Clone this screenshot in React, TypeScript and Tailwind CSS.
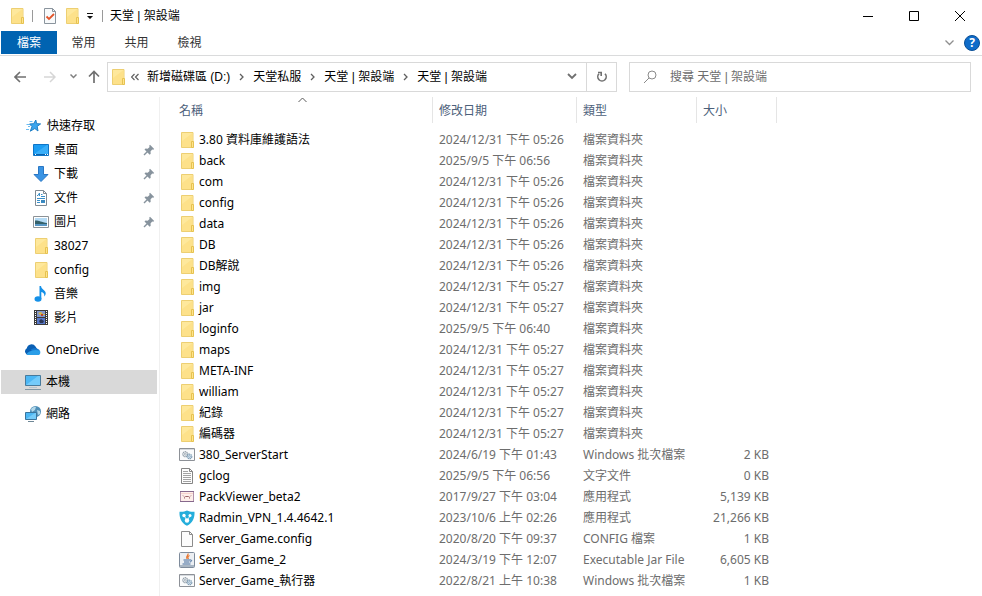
import type { ReactNode } from "react";

const folder = (
  <svg className="shrink-0" width="16" height="16" viewBox="0 0 16 16" fill="none">
    <path d="M2.5.5h11.500v15H2.500z" fill="#fee89c" stroke="#edcf72" />
    <path d="M3 15V9l10.500-8v14z" fill="#fde18a" />
    <path d="M12.500 9.500h2v6h-2z" fill="#ffe48c" stroke="#e6c251" />
  </svg>
);
const batch = (
  <svg className="shrink-0" width="16" height="16" viewBox="0 0 16 16" fill="none">
    <path d="M.5 1.500h15v12H.5z" fill="#fafbfc" stroke="#8d9197" />
    <path d="M1 2h14v1H1z" fill="#d5d9de" />
    <circle cx="6.300" cy="7.200" r="2.500" fill="#eef2f5" stroke="#8f9ba6" strokeWidth="1.200" strokeDasharray="1.300 .5" />
    <circle cx="6.300" cy="7.200" r="1" stroke="#8f9ba6" strokeWidth=".7" />
    <circle cx="10.500" cy="9.500" r="2.300" fill="#dcebf5" stroke="#7e9bb3" strokeWidth="1.200" strokeDasharray="1.300 .5" />
    <circle cx="10.500" cy="9.500" r=".9" stroke="#7e9bb3" strokeWidth=".7" />
  </svg>
);
const textFile = (
  <svg className="shrink-0" width="16" height="16" viewBox="0 0 16 16" fill="none">
    <path d="M2.500.5h8l3 3v12h-11z" fill="#fdfdfd" stroke="#858585" />
    <path d="M10.500.5v3h3" stroke="#858585" />
    <path d="M4 3.500h5M4 5.500h8M4 7.500h8M4 9.500h8M4 11.500h8M4 13.500h8" stroke="#a3a3a3" />
  </svg>
);
const blankFile = (
  <svg className="shrink-0" width="16" height="16" viewBox="0 0 16 16" fill="none">
    <path d="M2.500.5h8l3 3v12h-11z" fill="#fcfcfc" stroke="#8c8c8c" />
    <path d="M10.500.5v3h3" stroke="#8c8c8c" />
  </svg>
);
const packViewer = (
  <svg className="shrink-0" width="16" height="16" viewBox="0 0 16 16" fill="none">
    <path d="M1.500 2.500h13v10h-13z" fill="#fdeeea" stroke="#b193ad" />
    <path d="M1 2.500h14M1 12.500h14" stroke="#86688c" />
    <path d="M2 4.500h12" stroke="#f7d3cd" />
    <path d="M5.500 9.500V8.500l1-1h3l1 1v1M4 6.500l1 1M12 6.500l-1 1" stroke="#9c6468" />
  </svg>
);
const radmin = (
  <svg className="shrink-0" width="16" height="16" viewBox="0 0 16 16" fill="none">
    <path d="M8 .5c2.500 1.300 5 1.500 7.500 1.200.4 6-1.800 11.300-7.500 14.100C2.300 13 .1 7.700.5 1.700 3 2 5.500 1.800 8 .5z" fill="#25aedb" />
    <path d="M8 10.500L5 5.500M8 10.500l3-4.500" stroke="#fff" strokeWidth=".8" />
    <circle cx="5" cy="5.500" r="1.700" fill="#fff" />
    <circle cx="11" cy="5.500" r="1.500" fill="#fff" />
    <circle cx="8" cy="10.500" r="2.200" fill="#fff" />
  </svg>
);
const jar = (
  <svg className="shrink-0" width="16" height="16" viewBox="0 0 16 16" fill="none">
    <rect x=".5" y=".5" width="15" height="15" rx="1" fill="#eceff3" stroke="#7e8b9b" />
    <path d="M1 13h14v2H1z" fill="#a9b6c4" />
    <path d="M9 1.500c1 2-3 2.500-1 5.500M10.500 3.500c-2 1-2 2-1 3.500" stroke="#e8742c" strokeWidth="1.200" />
    <path d="M4.500 8h6.500M5 10h5.500M3.500 12h8M11 8c2.200-.5 2.200 1.500 0 2" stroke="#40689a" />
  </svg>
);
const star = (
  <svg className="shrink-0" width="16" height="16" viewBox="0 0 16 16" fill="none">
    <path d="M9.800 2l.8 3.700 4 .2-3.400 2.500.8 4.600-3.200-2.500-4.500 2.700 1.700-4.600L3.500 6l4.200-.3z" fill="#3aa5ee" stroke="#1f7fc6" />
    <path d="M3.500 3.500h3M.5 6.500h2.500M2 8.500h2M0 11.500h3" stroke="#6bbcf2" />
  </svg>
);
const desktop = (
  <svg className="shrink-0" width="16" height="16" viewBox="0 0 16 16" fill="none">
    <path d="M.5 2.500h15v11H.5z" fill="#1c9df3" stroke="#0f75c7" />
    <path d="M1 12L14 3h1v9z" fill="#3aaef8" />
    <path d="M1 12.500h14" stroke="#0a62ad" />
    <path d="M2 12.500h1M12 12.500h1M14 12.500h1" stroke="#fff" />
  </svg>
);
const download = (
  <svg className="shrink-0" width="16" height="16" viewBox="0 0 16 16" fill="none">
    <path d="M5.500.5h5v8H15L8 15.500 1 8.500h4.500z" fill="#3a94e4" stroke="#2a77c4" />
  </svg>
);
const docs = (
  <svg className="shrink-0" width="16" height="16" viewBox="0 0 16 16" fill="none">
    <path d="M2.500.5h8l3 3v12h-11z" fill="#fff" stroke="#808b94" />
    <path d="M10.500.5v3h3" stroke="#808b94" />
    <path d="M4 5.500h1l1.500-2.500v3M8 4.500h1.500M8 6.500h4M4 8.500h8M4 10.500h3M4 12.500h3M8 12.500h4" stroke="#3a8fc9" />
    <path d="M8 10h4v2H8z" fill="#3a87bd" />
  </svg>
);
const pictures = (
  <svg className="shrink-0" width="16" height="16" viewBox="0 0 16 16" fill="none">
    <path d="M.5 2.500h15v11H.5z" fill="#fff" stroke="#8c9297" />
    <path d="M2 4h12v8H2z" fill="#b5dbf5" />
    <path d="M2 6.500c3-.5 6 1.500 12 2.500v1H2z" fill="#35616a" />
    <path d="M2 10h12v2H2z" fill="#5796c4" />
  </svg>
);
const music = (
  <svg className="shrink-0" width="16" height="16" viewBox="0 0 16 16" fill="none">
    <ellipse cx="5" cy="13" rx="3.500" ry="2.700" fill="#1490e8" />
    <path d="M6.500 0H8c.5 3.500 4.500 4 4.700 7 .1 1.500-.6 2.800-1.500 3.500.6-2.500-.7-4-2.900-4.500V13H6.500z" fill="#1490e8" />
  </svg>
);
const videos = (
  <svg className="shrink-0" width="16" height="16" viewBox="0 0 16 16" fill="none">
    <path d="M1 0h14v15H1z" fill="#3b3b3b" />
    <path d="M4 1h8v6H4z" fill="#8297cc" />
    <path d="M4 8h8v6H4z" fill="#5878c8" />
    <path d="M5 3l3-1 2 2h2v1H7z" fill="#d8b643" />
    <path d="M6 11l2-2 3 2-1 2H7z" fill="#2a3555" />
    <path d="M8 4h2v2H8z" fill="#b84531" />
    <path d="M2.500 1v14M13.500 1v14" stroke="#fff" strokeDasharray="1 1" />
  </svg>
);
const cloud = (
  <svg className="shrink-0" width="16" height="16" viewBox="0 0 16 16" fill="none">
    <path d="M3.500 13A3.600 3.600 0 0 1 1.800 6.300 4.800 4.800 0 0 1 10.500 4.500L12.500 7.500l-8 5.500z" fill="#0a5fb4" />
    <path d="M6 7.500c2-1.500 5-1.500 6.500-.7A3.300 3.300 0 0 1 13 13H8z" fill="#1679d0" />
    <path d="M1.500 12c1.500-2.500 4.500-3 6-3.500 2-.8 4-.8 7.500.2.800 2 .2 4.300-2 4.300H3.500c-1 0-1.600-.5-2-1z" fill="#2a9ee8" />
  </svg>
);
const computer = (
  <svg className="shrink-0" width="16" height="16" viewBox="0 0 16 16" fill="none">
    <path d="M.5 1.500h15v10H.5z" fill="#4cb7f4" stroke="#477a9c" />
    <path d="M1 11L13 2h2v9z" fill="#74cbfa" />
    <path d="M4 13.500h8" stroke="#b5c4cd" />
    <path d="M0 15.500h16" stroke="#8097a4" />
  </svg>
);
const network = (
  <svg className="shrink-0" width="16" height="16" viewBox="0 0 16 16" fill="none">
    <circle cx="10.500" cy="5.500" r="5.500" fill="#4f8fb8" />
    <path d="M6 3c2-2 4-2.500 5-2l-1 3-3 2zM12 4l3 1v3l-2 1z" fill="#b3d8ea" />
    <path d="M.5 6.500h11v7H.5z" fill="#4cb7f4" stroke="#38749d" />
    <path d="M1 13l9-6h1v6z" fill="#74cbfa" />
    <path d="M3 15.500h6" stroke="#6e8796" />
  </svg>
);
const pin = (
  <svg className="ml-auto" width="12" height="12" viewBox="0 0 12 12" fill="none">
    <path d="M7 .8l4.200 4.200-1 .8-1-.2L7.500 7.500l.2 2.200-1 1L1.500 5.500l1-1 2.200.2L6.600 3l-.4-1.200z" fill="#87939d" />
    <path d="M4.500 7.500L1 11" stroke="#87939d" strokeWidth="1.500" />
  </svg>
);
const properties = (
  <svg className="shrink-0" width="16" height="16" viewBox="0 0 16 16" fill="none">
    <path d="M2.500.5h8l3 3v12h-11z" fill="#f8fafb" stroke="#8a949d" />
    <path d="M10.500.5v3h3" stroke="#8a949d" />
    <path d="M4.500 8.500L7 11l5-5" stroke="#e2552b" strokeWidth="1.800" />
  </svg>
);
const crumbArrow = (
  <svg width="5" height="8" viewBox="0 0 5 8" fill="none" stroke="#5f5f5f" strokeWidth="1.300"><path d="M1 1l3 3-3 3" /></svg>
);

type NavItem = { icon: ReactNode; label: string; pinned?: boolean };

const QUICK: NavItem[] = [
  { icon: desktop, label: "桌面", pinned: true },
  { icon: download, label: "下載", pinned: true },
  { icon: docs, label: "文件", pinned: true },
  { icon: pictures, label: "圖片", pinned: true },
  { icon: folder, label: "38027" },
  { icon: folder, label: "config" },
  { icon: music, label: "音樂" },
  { icon: videos, label: "影片" },
];

const ROOTS: NavItem[] = [
  { icon: cloud, label: "OneDrive" },
  { icon: computer, label: "本機" },
  { icon: network, label: "網路" },
];

const CRUMBS = ["新增磁碟區 (D:)", "天堂私服", "天堂 | 架設端", "天堂 | 架設端"];

const dir = (name: string, date: string) => ({ icon: folder, name, date, type: "檔案資料夾", size: "" });

const FILES = [
  dir("3.80 資料庫維護語法", "2024/12/31 下午 05:26"),
  dir("back", "2025/9/5 下午 06:56"),
  dir("com", "2024/12/31 下午 05:26"),
  dir("config", "2024/12/31 下午 05:26"),
  dir("data", "2024/12/31 下午 05:26"),
  dir("DB", "2024/12/31 下午 05:26"),
  dir("DB解說", "2024/12/31 下午 05:26"),
  dir("img", "2024/12/31 下午 05:27"),
  dir("jar", "2024/12/31 下午 05:27"),
  dir("loginfo", "2025/9/5 下午 06:40"),
  dir("maps", "2024/12/31 下午 05:27"),
  dir("META-INF", "2024/12/31 下午 05:27"),
  dir("william", "2024/12/31 下午 05:27"),
  dir("紀錄", "2024/12/31 下午 05:27"),
  dir("編碼器", "2024/12/31 下午 05:27"),
  { icon: batch, name: "380_ServerStart", date: "2024/6/19 下午 01:43", type: "Windows 批次檔案", size: "2 KB" },
  { icon: textFile, name: "gclog", date: "2025/9/5 下午 06:56", type: "文字文件", size: "0 KB" },
  { icon: packViewer, name: "PackViewer_beta2", date: "2017/9/27 下午 03:04", type: "應用程式", size: "5,139 KB" },
  { icon: radmin, name: "Radmin_VPN_1.4.4642.1", date: "2023/10/6 上午 02:26", type: "應用程式", size: "21,266 KB" },
  { icon: blankFile, name: "Server_Game.config", date: "2020/8/20 下午 09:37", type: "CONFIG 檔案", size: "1 KB" },
  { icon: jar, name: "Server_Game_2", date: "2024/3/19 下午 12:07", type: "Executable Jar File", size: "6,605 KB" },
  { icon: batch, name: "Server_Game_執行器", date: "2022/8/21 上午 10:38", type: "Windows 批次檔案", size: "1 KB" },
];

function TitleBar() {
  return (
    <header className="flex h-[31px] items-center pl-[9px]">
      {folder}
      <span className="ml-[7px] h-3 w-px bg-[#9a9a9a]" />
      <button aria-label="內容" className="ml-[9px]">{properties}</button>
      <button aria-label="新增資料夾" className="ml-[6px]">{folder}</button>
      <button aria-label="自訂快速存取工具列" className="ml-[6px]">
        <svg width="8" height="8" viewBox="0 0 8 8"><path d="M1 1h6v1H1zM1 4h6L4 7z" fill="#111" /></svg>
      </button>
      <span className="ml-2 h-3 w-px bg-[#9a9a9a]" />
      <h1 className="ml-[7px] font-['Liberation_Sans','Noto_Sans_CJK_TC',sans-serif]">天堂 | 架設端</h1>
      <div className="ml-auto flex h-full gap-[2px]">
        <button aria-label="最小化" className="flex w-11 items-center justify-center">
          <svg width="10" height="10" viewBox="0 0 10 10" stroke="#000"><path d="M0 5.500h10" /></svg>
        </button>
        <button aria-label="最大化" className="flex w-11 items-center justify-center">
          <svg width="10" height="10" viewBox="0 0 10 10" fill="none" stroke="#000"><path d="M.5.5h9v9h-9z" /></svg>
        </button>
        <button aria-label="關閉" className="flex w-11 items-center justify-center">
          <svg width="10" height="10" viewBox="0 0 10 10" stroke="#000"><path d="M0 0l10 10M10 0L0 10" /></svg>
        </button>
      </div>
    </header>
  );
}

function Ribbon() {
  return (
    <nav className="flex h-[25px] items-start border-b border-[#dadbdc] pl-px">
      <button className="h-[23px] w-14 bg-[#0063b1] text-white">檔案</button>
      <button className="h-[23px] w-[53px] text-[#333]">常用</button>
      <button className="h-[23px] w-[53px] text-[#333]">共用</button>
      <button className="h-[23px] w-[53px] text-[#333]">檢視</button>
      <div className="ml-auto flex h-6 items-center gap-[10px] pr-[2px]">
        <button aria-label="展開功能區">
          <svg width="9" height="6" viewBox="0 0 9 6" fill="none" stroke="#8f8f8f" strokeWidth="1.300"><path d="M.5.5l4 4 4-4" /></svg>
        </button>
        <button aria-label="說明" className="flex size-4 items-center justify-center rounded-full border border-[#0a4f96] bg-[#0f6cc9] font-bold text-white">?</button>
      </div>
    </nav>
  );
}

function AddressBar() {
  return (
    <div className="flex h-[41px] items-center pr-[11px] pl-[14px]">
      <button aria-label="上一頁">
        <svg width="12" height="12" viewBox="0 0 12 12" fill="none" stroke="#707070" strokeWidth="1.600"><path d="M12 6H1M6 1L1 6l5 5" /></svg>
      </button>
      <button aria-label="下一頁" className="ml-[18px]" disabled>
        <svg width="12" height="12" viewBox="0 0 12 12" fill="none" stroke="#d6d6d6" strokeWidth="1.500"><path d="M0 6h11M6 1l5 5-5 5" /></svg>
      </button>
      <button aria-label="最近的位置" className="ml-[14px]">
        <svg width="7" height="5" viewBox="0 0 7 5" fill="none" stroke="#808080" strokeWidth="1.500"><path d="M.5.5l3 3 3-3" /></svg>
      </button>
      <button aria-label="上一層" className="ml-[11px]">
        <svg width="12" height="13" viewBox="0 0 12 13" fill="none" stroke="#707070" strokeWidth="1.700"><path d="M6 13V1M1 6.500l5-5 5 5" /></svg>
      </button>
      <div className="ml-[7px] flex h-[30px] w-[510px] items-center border border-[#d9d9d9] pl-[2px]">
        {folder}
        <svg className="mr-2 ml-[5px] shrink-0" width="8" height="8" viewBox="0 0 8 8" fill="none" stroke="#5f5f5f" strokeWidth="1.200"><path d="M3.500 1l-3 3 3 3M7.500 1l-3 3 3 3" /></svg>
        <ol className="flex items-center gap-[9px] font-['Liberation_Sans','Noto_Sans_CJK_TC',sans-serif]">
          {CRUMBS.map((c, i) => (
            <li key={i} className="flex items-center gap-[9px] whitespace-nowrap">
              {i > 0 && crumbArrow}
              <a href="#">{c}</a>
            </li>
          ))}
        </ol>
        <button aria-label="先前的位置" className="ml-auto flex h-full w-[29px] items-center justify-center border-r border-[#d9d9d9]">
          <svg width="10" height="7" viewBox="0 0 10 7" fill="none" stroke="#707070" strokeWidth="1.800"><path d="M1 1l4 4 4-4" /></svg>
        </button>
        <button aria-label="重新整理" className="flex h-full w-[29px] items-center justify-center">
          <svg width="12" height="12" viewBox="0 0 12 12" fill="none" stroke="#707070" strokeWidth="1.600">
            <path d="M9 2.800A4.200 4.200 0 1 1 3 2.800" />
            <path d="M2 1.500h3.200V5" />
          </svg>
        </button>
      </div>
      <label className="ml-3 flex h-[30px] min-w-0 flex-1 items-center border border-[#d9d9d9] pl-[14px]">
        <svg className="shrink-0" width="13" height="13" viewBox="0 0 13 13" fill="none" stroke="#8a8a8a"><circle cx="8" cy="5" r="4" /><path d="M5 8l-5 5" /></svg>
        <input type="search" aria-label="搜尋" placeholder="搜尋 天堂 | 架設端" className="ml-[13px] min-w-0 flex-1 font-['Liberation_Sans','Noto_Sans_CJK_TC',sans-serif] outline-none placeholder:text-[#6d6d6d]" />
      </label>
    </div>
  );
}

function NavPane() {
  return (
    <aside className="w-[160px] shrink-0 border-r border-[#f0f0f0] pt-[17px]">
      <a href="#" className="flex h-6 items-center gap-[5px] pl-[26px]">{star}快速存取</a>
      <ul>
        {QUICK.map((q) => (
          <li key={q.label}>
            <a href="#" className="flex h-6 items-center gap-[5px] pr-1 pl-[33px]">
              {q.icon}
              {q.label}
              {q.pinned && pin}
            </a>
          </li>
        ))}
      </ul>
      <ul className="mt-2 flex flex-col gap-2">
        {ROOTS.map((r) => (
          <li key={r.label} className={r.label === "本機" ? "mr-[2px] ml-px bg-[#d9d9d9] pl-6" : "pl-[25px]"}>
            <a href="#" className="flex h-6 items-center gap-[5px]">{r.icon}{r.label}</a>
          </li>
        ))}
      </ul>
    </aside>
  );
}

function FileTable() {
  return (
    <div className="min-w-0 flex-1">
      <table className="w-[617px] table-fixed text-left whitespace-nowrap text-[#6d6d6d]">
        <colgroup>
          <col className="w-[273px]" />
          <col className="w-[144px]" />
          <col className="w-[120px]" />
          <col className="w-[80px]" />
        </colgroup>
        <thead className="text-[#4c607a]">
          <tr className="h-8 align-top">
            <th className="p-0 font-normal">
              <div className="relative flex h-[26px] items-center border-r border-[#e5e5e5] pt-[2px] pl-[19px]">
                名稱
                <svg className="absolute top-0 left-[138px]" width="9" height="6" viewBox="0 0 9 6" fill="none" stroke="#5a5a5a"><path d="M.5 5l4-4 4 4" /></svg>
              </div>
            </th>
            {["修改日期", "類型", "大小"].map((h) => (
              <th key={h} className="p-0 font-normal">
                <div className="flex h-[26px] items-center border-r border-[#e5e5e5] pt-[2px] pl-[6px]">{h}</div>
              </th>
            ))}
          </tr>
        </thead>
        <tbody>
          {FILES.map((f) => (
            <tr key={f.name} className="h-[21px]">
              <td className="p-0 text-black">
                <div className="flex items-center gap-1 pl-[19px]">{f.icon}{f.name}</div>
              </td>
              <td className="p-0 pl-[6px]">{f.date}</td>
              <td className="p-0 pl-[6px]">{f.type}</td>
              <td className="p-0 pr-2 text-right">{f.size}</td>
            </tr>
          ))}
        </tbody>
      </table>
    </div>
  );
}

export default function App() {
  return (
    <div className="flex min-h-screen flex-col bg-white font-['Noto_Sans','Noto_Sans_CJK_TC',sans-serif] text-[12px] leading-4 text-black">
      <TitleBar />
      <Ribbon />
      <AddressBar />
      <main className="flex flex-1">
        <NavPane />
        <FileTable />
      </main>
    </div>
  );
}
